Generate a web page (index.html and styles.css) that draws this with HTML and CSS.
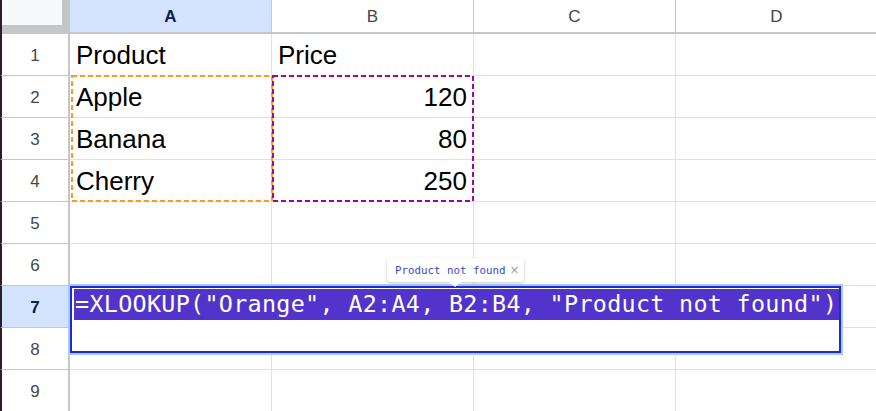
FILE: index.html
```html
<!DOCTYPE html>
<html>
<head>
<meta charset="utf-8">
<link rel="stylesheet" href="styles.css">
</head>
<body>
<div class="sheet">
  <div class="grid">
    <div class="corner"></div>
    <div class="ch sel">A</div>
    <div class="ch">B</div>
    <div class="ch">C</div>
    <div class="ch">D</div>

    <div class="rh">1</div>
    <div class="c">Product</div>
    <div class="c">Price</div>
    <div class="c"></div>
    <div class="c"></div>

    <div class="rh">2</div>
    <div class="c">Apple</div>
    <div class="c num">120</div>
    <div class="c"></div>
    <div class="c"></div>

    <div class="rh">3</div>
    <div class="c">Banana</div>
    <div class="c num">80</div>
    <div class="c"></div>
    <div class="c"></div>

    <div class="rh">4</div>
    <div class="c">Cherry</div>
    <div class="c num">250</div>
    <div class="c"></div>
    <div class="c"></div>

    <div class="rh">5</div>
    <div class="c"></div>
    <div class="c"></div>
    <div class="c"></div>
    <div class="c"></div>

    <div class="rh">6</div>
    <div class="c"></div>
    <div class="c"></div>
    <div class="c"></div>
    <div class="c"></div>

    <div class="rh sel">7</div>
    <div class="c"></div>
    <div class="c"></div>
    <div class="c"></div>
    <div class="c"></div>

    <div class="rh">8</div>
    <div class="c"></div>
    <div class="c"></div>
    <div class="c"></div>
    <div class="c"></div>

    <div class="rh">9</div>
    <div class="c"></div>
    <div class="c"></div>
    <div class="c"></div>
    <div class="c"></div>
  </div>

  <svg class="marquee" width="876" height="411" viewBox="0 0 876 411">
    <rect x="72" y="76" width="200" height="125" fill="none" stroke="#ff9a1f" stroke-width="2" stroke-dasharray="5 3"/>
    <rect x="273" y="76" width="200" height="125" fill="none" stroke="#960b9c" stroke-width="2" stroke-dasharray="5 3"/>
  </svg>

  <div class="editor">
    <div class="editor-inner">
      <span class="formula">=XLOOKUP("Orange", A2:A4, B2:B4, "Product not found")</span>
    </div>
  </div>

  <div class="tip">
    <span class="tip-text">Product not found</span>
    <span class="tip-x">×</span>
  </div>
</div>
</body>
</html>
```

FILE: styles.css
```css
html, body {
  margin: 0;
  padding: 0;
  background: #ffffff;
}

.sheet {
  position: relative;
  width: 876px;
  height: 411px;
  overflow: hidden;
  font-family: "Liberation Sans", Arial, sans-serif;
}

.grid {
  display: grid;
  grid-template-columns: 70px 202px 202px 202px 202px;
  grid-template-rows: 34px repeat(9, 42px);
}

.grid > div {
  box-sizing: border-box;
}

.corner {
  border-left: 2px solid #2b1d2b;
  background:
    linear-gradient(#f8f9fa, #f8f9fa) no-repeat 0 0 / 60px 25px,
    #c4c7c5;
}

.ch {
  display: flex;
  align-items: center;
  justify-content: center;
  border-right: 1px solid #c4c7c5;
  border-bottom: 2px solid #c4c7c5;
  font-size: 17px;
  color: #444746;
  background: #ffffff;
  padding-top: 1px;
}

.ch.sel {
  background: #d3e3fd;
  color: #0b1d4f;
  font-weight: bold;
}

.rh {
  display: flex;
  align-items: center;
  justify-content: center;
  padding-top: 2px;
  border-left: 2px solid #2b1d2b;
  border-right: 2px solid #c4c7c5;
  border-bottom: 1px solid #c4c7c5;
  font-size: 17px;
  color: #444746;
  background: #ffffff;
}

.rh.sel {
  background: #d3e3fd;
  color: #0b1d4f;
  font-weight: bold;
}

.c {
  display: flex;
  align-items: center;
  padding: 2px 6px 0 6px;
  border-right: 1px solid #e1e1e1;
  border-bottom: 1px solid #e1e1e1;
  font-size: 26px;
  color: #000000;
  white-space: nowrap;
}

.c.num {
  justify-content: flex-end;
}

.marquee {
  position: absolute;
  left: 0;
  top: 0;
  pointer-events: none;
}

.editor {
  position: absolute;
  left: 68px;
  top: 284px;
  width: 775px;
  height: 71px;
  box-sizing: border-box;
  border: 2px solid #a8c7fa;
  background: #ffffff;
}

.editor-inner {
  box-sizing: border-box;
  height: 100%;
  border: 2px solid #1d2ad2;
  padding: 1px 2px;
  white-space: nowrap;
}

.formula {
  display: inline-block;
  height: 31px;
  line-height: 31px;
  padding: 0 2px 0 1px;
  background: #5234cc;
  color: #ffffff;
  font-family: "DejaVu Sans Mono", monospace;
  font-size: 23.4px;
  letter-spacing: 0.3px;
  vertical-align: top;
}

.tip {
  position: absolute;
  left: 387px;
  top: 258px;
  width: 137px;
  height: 24px;
  box-sizing: border-box;
  display: flex;
  align-items: center;
  padding: 0 0 0 8px;
  gap: 4px;
  background: #ffffff;
  border-radius: 3px;
  box-shadow: 0 1px 3px rgba(0, 0, 0, 0.25);
  font-family: "DejaVu Sans Mono", monospace;
  font-size: 10.8px;
  color: #3a4bc6;
  white-space: nowrap;
}

.tip::after {
  content: "";
  position: absolute;
  left: 62px;
  top: 24px;
  width: 0;
  height: 0;
  border-left: 6px solid transparent;
  border-right: 6px solid transparent;
  border-top: 5px solid #ffffff;
}

.tip-x {
  color: #a0a0a0;
  font-family: "DejaVu Sans", sans-serif;
  font-size: 12px;
}
```
